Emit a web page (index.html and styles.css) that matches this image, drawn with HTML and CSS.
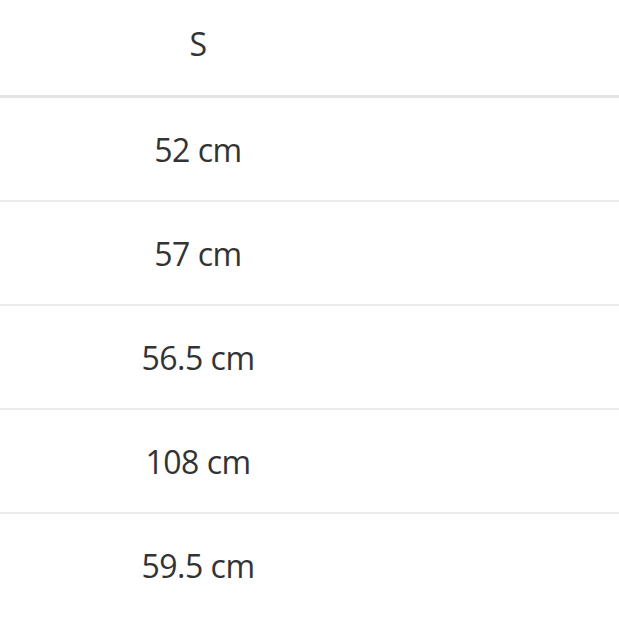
FILE: index.html
```html
<!DOCTYPE html>
<html lang="ko">
<head>
<meta charset="utf-8">
<title>Size</title>
<link rel="stylesheet" href="styles.css">
</head>
<body>
<div class="size-table">
  <div class="row head"><div class="cell">S</div><div class="cell"></div></div>
  <div class="row"><div class="cell">52 cm</div><div class="cell"></div></div>
  <div class="row"><div class="cell">57 cm</div><div class="cell"></div></div>
  <div class="row"><div class="cell">56.5 cm</div><div class="cell"></div></div>
  <div class="row"><div class="cell">108 cm</div><div class="cell"></div></div>
  <div class="row last"><div class="cell">59.5 cm</div><div class="cell"></div></div>
</div>
</body>
</html>
```
FILE: styles.css
```css
html, body {
  margin: 0;
  padding: 0;
  background: #ffffff;
}
body {
  font-family: "Open Sans", "Noto Sans", "Noto Sans CJK KR", sans-serif;
  color: #333333;
  width: 619px;
  height: 619px;
  overflow: hidden;
}
.size-table {
  display: flex;
  flex-direction: column;
}
.row {
  display: grid;
  grid-template-columns: 396px 1fr;
  height: 102px;
  border-bottom: 2px solid #ebebeb;
  align-items: center;
}
.row.head {
  height: 95px;
  border-bottom: 3px solid #e4e4e4;
}
.row.last {
  border-bottom: none;
}
.cell {
  text-align: center;
  font-size: 32px;
  letter-spacing: -0.5px;
  line-height: 1;
  padding-top: 1px;
}
.row.head .cell {
  padding-top: 0;
  padding-bottom: 7px;
}
```
